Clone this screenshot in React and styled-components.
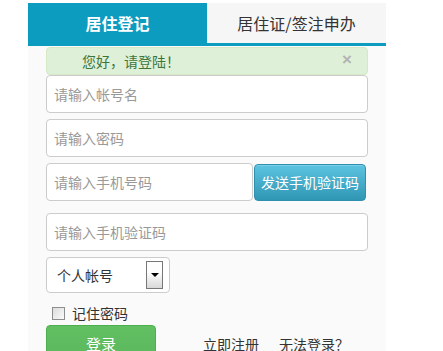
import React from "react";
import styled, { createGlobalStyle } from "styled-components";

const Global = createGlobalStyle`
  html, body { margin: 0; padding: 0; background: #fff; }
  body { font-family: "Noto Sans CJK SC", "Liberation Sans", sans-serif; }
  * { box-sizing: border-box; }
`;

const Page = styled.div`
  padding: 3px 0 0 28px;
`;

const Panel = styled.div`
  width: 358px;
  background: #fafafa;
  min-height: 360px;
`;

const Tabs = styled.div`
  display: flex;
  height: 43px;
  border-bottom: 3px solid #0b9cc0;
  background: #f6f6f6;
`;

const Tab = styled.div`
  flex: ${(p) => (p.$active ? "0 0 179px" : "1")};
  display: flex;
  align-items: center;
  justify-content: center;
  font-size: 16px;
  font-weight: ${(p) => (p.$active ? 700 : 400)};
  color: ${(p) => (p.$active ? "#fff" : "#333")};
  background: ${(p) => (p.$active ? "#0b9cc0" : "#f6f6f6")};
`;

const Body = styled.div`
  padding: 1px 18px 0 18px;
  display: flex;
  flex-direction: column;
`;

const Alert = styled.div`
  position: relative;
  height: 28px;
  background: #dff0d8;
  border: 1px solid #d6e9c6;
  border-radius: 4px;
  color: #3c763d;
  font-size: 14px;
  display: flex;
  align-items: center;
  padding-left: 35px;
`;

const Close = styled.span`
  position: absolute;
  right: 15px;
  top: 3px;
  font-family: "Liberation Sans", sans-serif;
  font-size: 17px;
  font-weight: 700;
  color: #b3b3b3;
  line-height: 18px;
`;

const Input = styled.input`
  display: block;
  width: ${(p) => p.$w || "322px"};
  height: 38px;
  margin-top: ${(p) => p.$mt || 0}px;
  border: 1px solid #ccc;
  border-radius: 4px;
  background: #fff;
  padding: 0 7px;
  font-family: inherit;
  font-size: 14px;
  color: #555;
  outline: none;
  &::placeholder { color: #999; }
`;

const Row = styled.div`
  display: flex;
  align-items: center;
  gap: ${(p) => p.$gap || 0}px;
  margin-top: ${(p) => p.$mt || 0}px;
`;

const SendButton = styled.button`
  width: 112px;
  height: 37px;
  border: 1px solid #2f8fae;
  border-radius: 4px;
  background: linear-gradient(#5cc3e0, #2f96b4);
  color: #fff;
  font-family: inherit;
  font-size: 14px;
  padding: 0;
  box-shadow: inset 0 1px 0 rgba(255,255,255,0.2);
`;

const Select = styled.div`
  width: 124px;
  height: 36px;
  margin-top: 6px;
  border: 1px solid #ccc;
  border-radius: 4px;
  background: #fff;
  display: flex;
  align-items: center;
  justify-content: space-between;
  padding: 0 6px 0 10px;
  font-size: 14px;
  color: #333;
`;

const Arrow = styled.span`
  width: 17px;
  height: 28px;
  border: 1px solid #777;
  background: linear-gradient(#fdfdfd 40%, #d8d8d8);
  display: flex;
  align-items: center;
  justify-content: center;
  &::after {
    content: "";
    border-left: 4px solid transparent;
    border-right: 4px solid transparent;
    border-top: 4px solid #000;
  }
`;

const Check = styled.label`
  display: flex;
  align-items: center;
  gap: 7px;
  margin-top: 13px;
  padding-left: 6px;
  font-size: 14px;
  color: #333;
  height: 14px;
`;

const Box = styled.span`
  width: 13px;
  height: 13px;
  border: 1px solid #8e8e8e;
  background: linear-gradient(135deg, #dcdcdc, #fbfbfb);
`;

const Footer = styled.div`
  display: flex;
  align-items: flex-start;
  margin-top: 5px;
`;

const LoginButton = styled.button`
  width: 110px;
  height: 34px;
  border: 1px solid #4cae4c;
  border-radius: 4px;
  background: linear-gradient(#62bf62, #5cb85c);
  color: #fff;
  font-family: inherit;
  font-size: 15px;
  padding: 2px 0 0;
`;

const Links = styled.div`
  display: flex;
  gap: 20px;
  margin-left: 47px;
  font-size: 14px;
  line-height: 16px;
  color: #333;
  padding-top: 11px;
`;

export default function App() {
  return (
    <>
      <Global />
      <Page>
        <Panel>
          <Tabs>
            <Tab $active>居住登记</Tab>
            <Tab>居住证/签注申办</Tab>
          </Tabs>
          <Body>
            <Alert>
              您好，请登陆！
              <Close>×</Close>
            </Alert>
            <Input placeholder="请输入帐号名" />
            <Input placeholder="请输入密码" $mt={6} />
            <Row $mt={6} $gap={1}>
              <Input placeholder="请输入手机号码" $w="207px" />
              <SendButton>发送手机验证码</SendButton>
            </Row>
            <Input placeholder="请输入手机验证码" $mt={12} />
            <Select>
              个人帐号
              <Arrow />
            </Select>
            <Check>
              <Box />
              记住密码
            </Check>
            <Footer>
              <LoginButton>登录</LoginButton>
              <Links>
                <span>立即注册</span>
                <span>无法登录？</span>
              </Links>
            </Footer>
          </Body>
        </Panel>
      </Page>
    </>
  );
}
